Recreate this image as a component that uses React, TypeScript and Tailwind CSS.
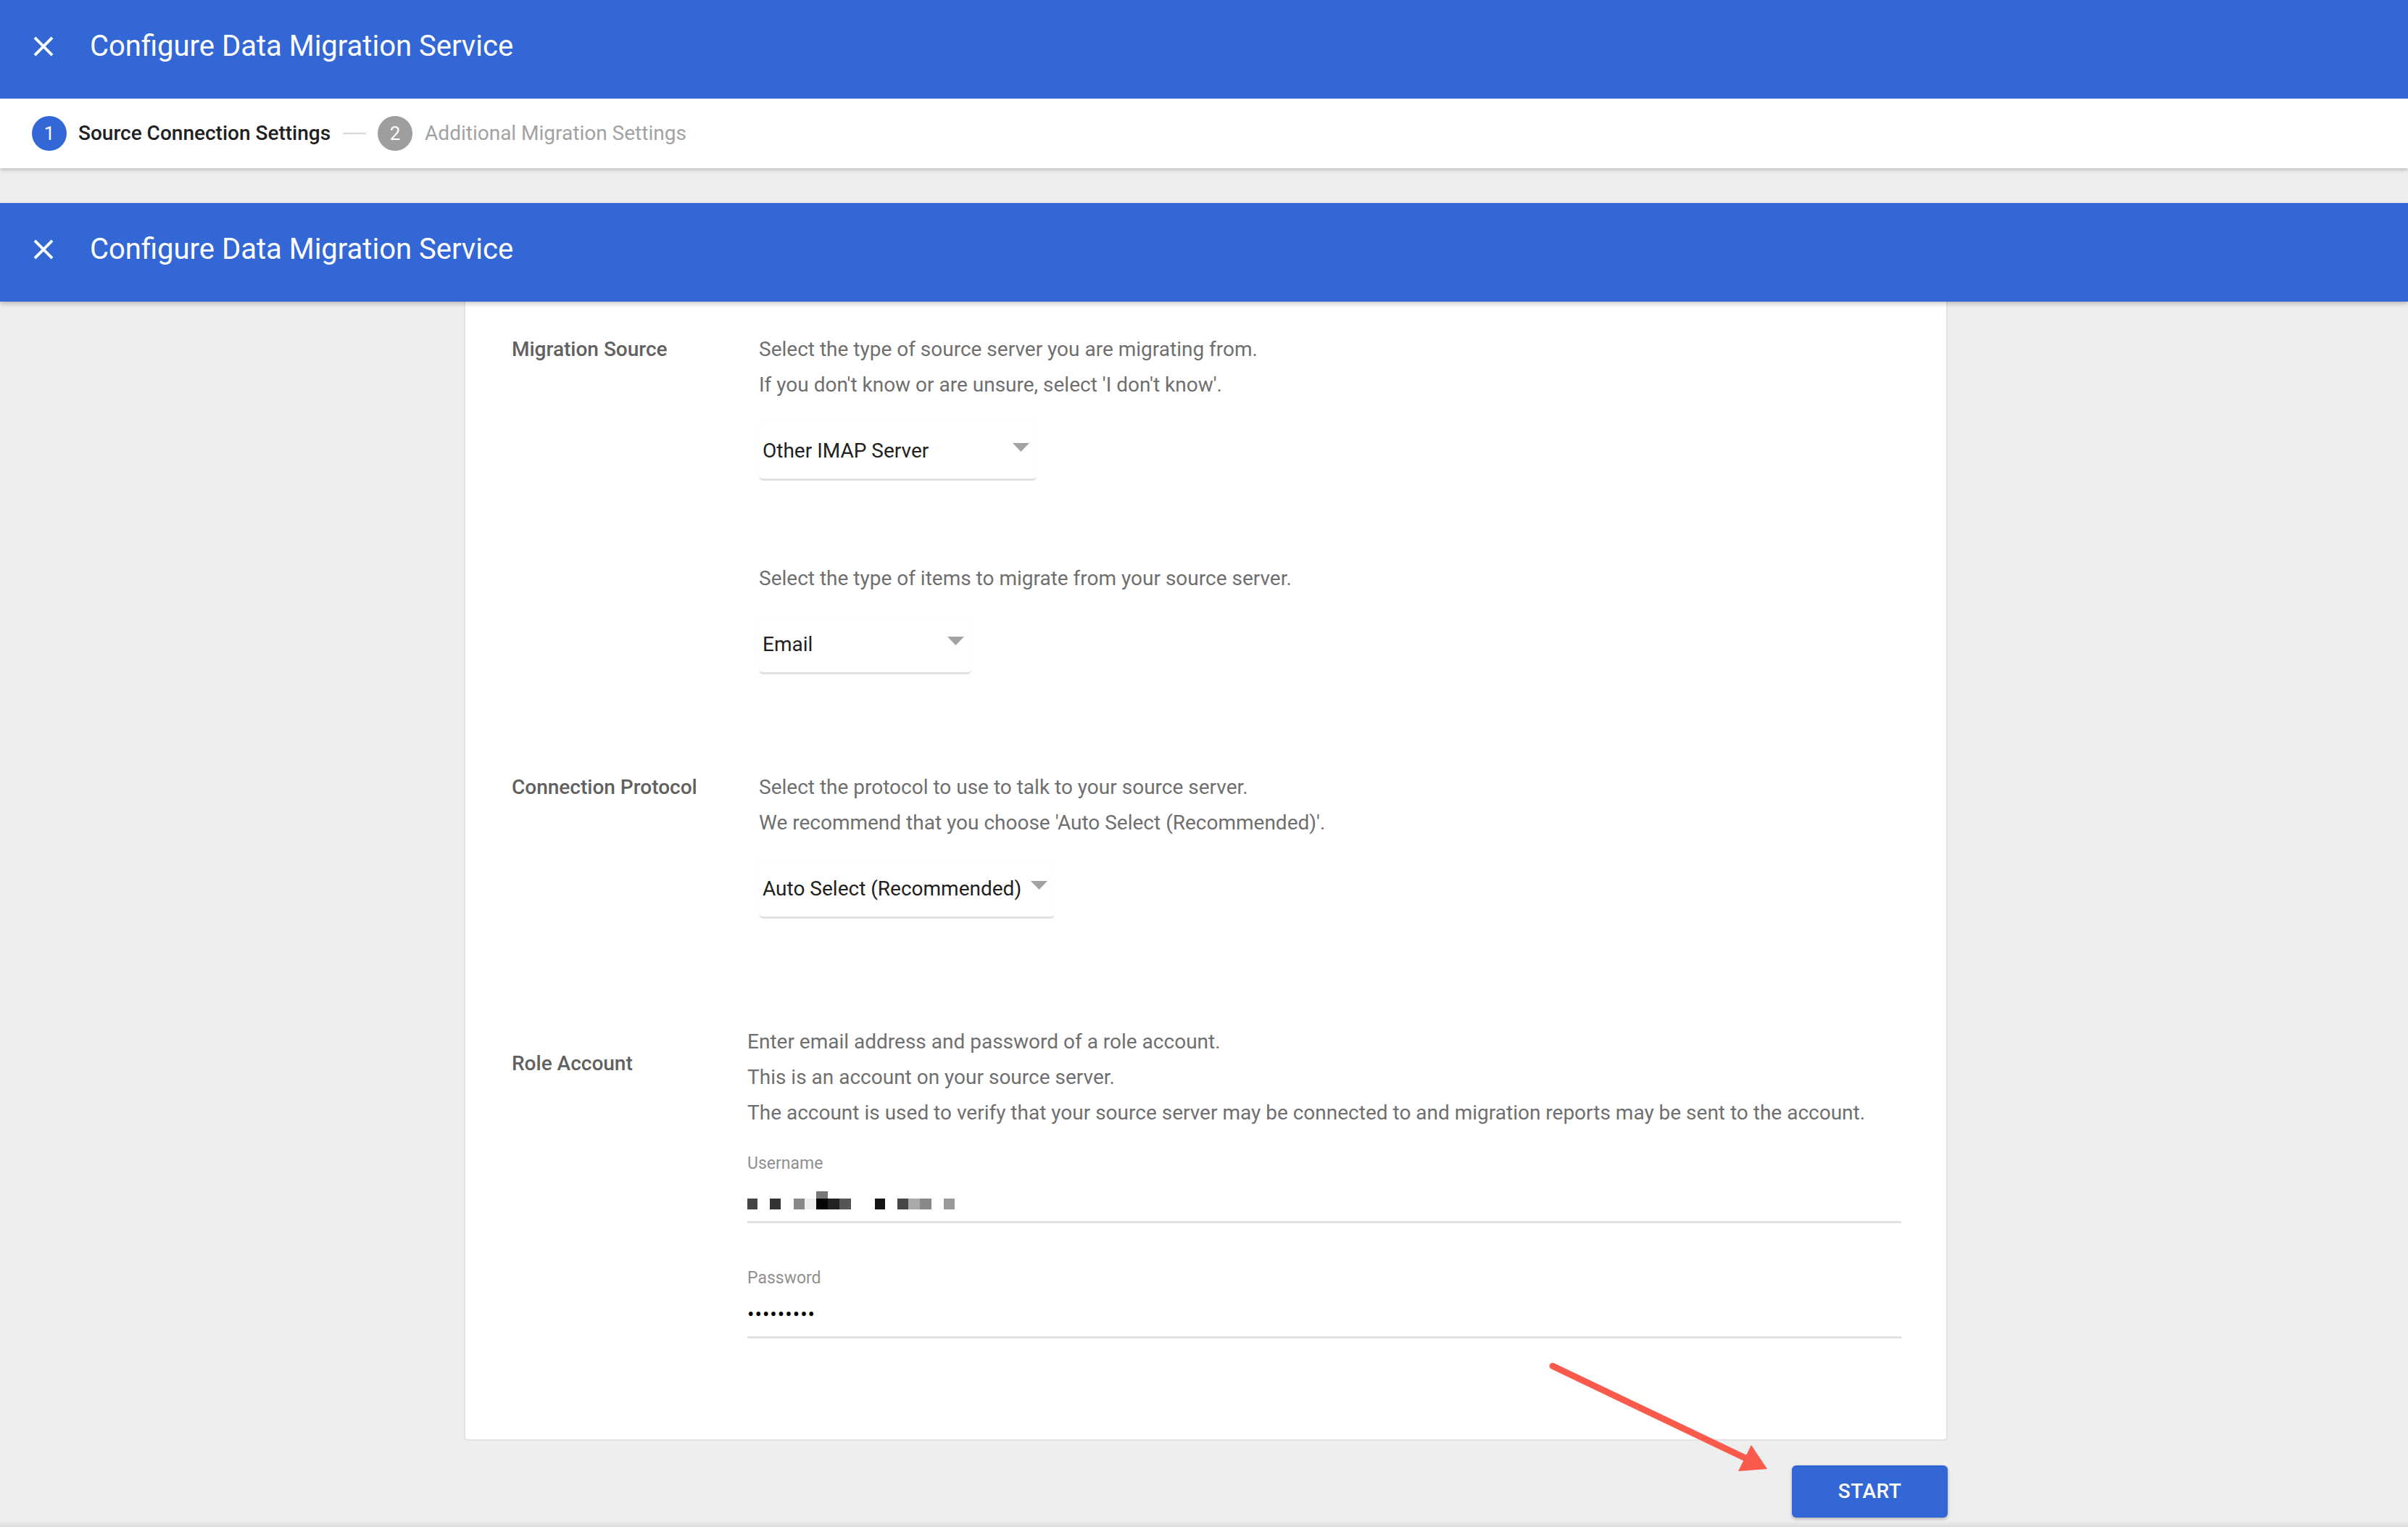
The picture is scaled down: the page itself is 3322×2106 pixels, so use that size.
import React from "react";

const BLUE = "bg-[#3367d6]";

function CloseIcon() {
  return (
    <svg width="46" height="46" viewBox="0 0 24 24" className="shrink-0">
      <path
        fill="#ffffff"
        d="M19 6.41L17.59 5 12 10.59 6.41 5 5 6.41 10.59 12 5 17.59 6.41 19 12 13.41 17.59 19 19 17.59 13.41 12z"
      />
    </svg>
  );
}

function Header({ shadow }: { shadow?: boolean }) {
  return (
    <div
      className={`${BLUE} h-[136px] pb-[8px] flex items-center pl-[37px] relative z-10 ${
        shadow ? "shadow-[0_3px_6px_rgba(0,0,0,0.22)]" : ""
      }`}
    >
      <CloseIcon />
      <div className="ml-[41px] text-white text-[40px] leading-[48px] font-normal">
        Configure Data Migration Service
      </div>
    </div>
  );
}

function Stepper() {
  return (
    <div className="bg-white h-[96px] flex items-center pl-[44px] relative z-[5] shadow-[0_3px_5px_rgba(0,0,0,0.18)]">
      <div className="w-[48px] h-[48px] rounded-full bg-[#3367d6] text-white flex items-center justify-center text-[26px]">
        1
      </div>
      <div className="ml-[16px] text-[28px] font-medium text-[#212121]">Source Connection Settings</div>
      <div className="ml-[17px] w-[32px] h-[2px] bg-[#d6d6d6]" />
      <div className="ml-[16px] w-[48px] h-[48px] rounded-full bg-[#9e9e9e] text-white flex items-center justify-center text-[26px]">
        2
      </div>
      <div className="ml-[17px] text-[28px] text-[#a2a2a2]">Additional Migration Settings</div>
    </div>
  );
}

function Caret() {
  return (
    <svg width="23" height="12" viewBox="0 0 23 12" className="shrink-0 mb-[10px]">
      <polygon points="0,0 23,0 11.5,12" fill="#a3a3a3" />
    </svg>
  );
}

function Dropdown({ value, width }: { value: string; width: string }) {
  return (
    <div
      className={`${width} h-[80px] mt-[28px] flex items-center justify-between gap-[12px] pl-[5px] pr-[10px] border-b-[3px] border-[#e1e1e1] rounded-[6px] shadow-[0_0_2px_rgba(0,0,0,0.05)]`}
    >
      <span className="text-[28px] text-[#212121] whitespace-nowrap">{value}</span>
      <Caret />
    </div>
  );
}

function Desc({ children }: { children: React.ReactNode }) {
  return <div className="text-[28px] leading-[49px] text-[#6f6f6f] whitespace-nowrap">{children}</div>;
}

function Label({ children, className = "" }: { children: React.ReactNode; className?: string }) {
  return (
    <div className={`text-[28px] leading-[49px] font-medium text-[#616161] whitespace-nowrap ${className}`}>
      {children}
    </div>
  );
}

function RedactedUsername() {
  const rects: [number, number, number, number, string][] = [
    [0, 10, 14, 15, "#444444"],
    [31, 10, 15, 15, "#333333"],
    [64, 10, 15, 15, "#888888"],
    [79, 10, 16, 15, "#eeeeee"],
    [95, 0, 16, 10, "#777777"],
    [95, 10, 16, 15, "#050505"],
    [111, 10, 16, 15, "#222222"],
    [127, 10, 16, 15, "#555555"],
    [176, 10, 14, 15, "#151515"],
    [207, 10, 15, 15, "#464646"],
    [222, 10, 16, 15, "#aaaaaa"],
    [238, 10, 16, 15, "#888888"],
    [271, 10, 15, 15, "#999999"],
  ];
  return (
    <svg width="290" height="25" viewBox="0 0 290 25">
      {rects.map(([x, y, w, h, c], i) => (
        <rect key={i} x={x} y={y} width={w} height={h} fill={c} />
      ))}
    </svg>
  );
}

export default function App() {
  return (
    <div
      className="relative w-[3322px] h-[2106px] bg-[#eeeeee] overflow-hidden"
      style={{ fontFamily: "Roboto, 'Noto Sans', 'Liberation Sans', sans-serif" }}
    >
      <Header />
      <Stepper />
      <div className="h-[48px]" />
      <Header shadow />

      <div className="w-[2047px] ml-[640px]">
        <div className="bg-white border-x-2 border-b-2 border-[#e3e3e3] rounded-b-[6px] pt-[41px] pl-[64px] pr-[62px] pb-[139px]">
          {/* Migration Source */}
          <div className="flex">
            <Label className="w-[341px] shrink-0">Migration Source</Label>
            <div className="flex flex-col">
              <Desc>Select the type of source server you are migrating from.</Desc>
              <Desc>If you don't know or are unsure, select 'I don't know'.</Desc>
              <Dropdown value="Other IMAP Server" width="w-[383px]" />
              <div className="mt-[110px]">
                <Desc>Select the type of items to migrate from your source server.</Desc>
              </div>
              <Dropdown value="Email" width="w-[293px]" />
            </div>
          </div>

          {/* Connection Protocol */}
          <div className="flex mt-[131px]">
            <Label className="w-[341px] shrink-0">Connection Protocol</Label>
            <div className="flex flex-col">
              <Desc>Select the protocol to use to talk to your source server.</Desc>
              <Desc>We recommend that you choose 'Auto Select (Recommended)'.</Desc>
              <Dropdown value="Auto Select (Recommended)" width="w-[408px]" />
            </div>
          </div>

          {/* Role Account */}
          <div className="flex mt-[145px]">
            <Label className="w-[325px] shrink-0 mt-[30px]">Role Account</Label>
            <div className="flex flex-col flex-1">
              <Desc>Enter email address and password of a role account.</Desc>
              <Desc>This is an account on your source server.</Desc>
              <Desc>
                The account is used to verify that your source server may be connected to and migration reports may be
                sent to the account.
              </Desc>

              <div className="mt-[31px] text-[23px] leading-[30px] text-[#8f8f8f]">Username</div>
              <div className="h-[67px] border-b-[3px] border-[#e1e1e1] pt-[23px]">
                <RedactedUsername />
              </div>

              <div className="mt-[61px] text-[23px] leading-[30px] text-[#8f8f8f]">Password</div>
              <div className="h-[68px] border-b-[3px] border-[#e1e1e1] pt-[20px]">
                <div className="text-[28px] leading-[30px] text-black tracking-[1px]">•••••••••</div>
              </div>
            </div>
          </div>
        </div>

        <div className="flex justify-end mt-[34px]">
          <button className="w-[215px] h-[72px] rounded-[6px] bg-[#3367d6] text-white text-[28px] font-medium tracking-[0.5px] shadow-[0_2px_4px_rgba(0,0,0,0.25)]">
            START
          </button>
        </div>
      </div>

      {/* bottom edge shade */}
      <div className="absolute left-0 right-0 bottom-0 h-[8px] bg-gradient-to-b from-transparent to-[#dcdcdc]" />

      {/* red annotation arrow */}
      <svg className="absolute left-0 top-0 pointer-events-none" width="3322" height="2106" viewBox="0 0 3322 2106">
        <line x1="2142" y1="1884" x2="2410" y2="2012" stroke="#fa5a4b" strokeWidth="9" strokeLinecap="round" />
        <polygon points="2416,1993 2438,2026 2398,2029" fill="#fa5a4b" />
      </svg>
    </div>
  );
}
